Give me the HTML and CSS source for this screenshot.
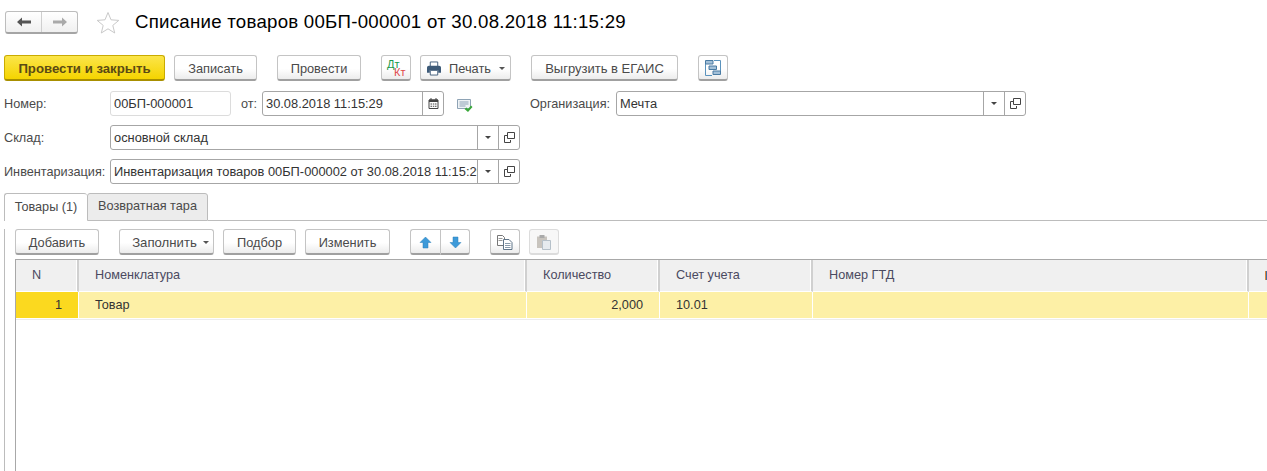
FILE: index.html
```html
<!DOCTYPE html>
<html lang="ru">
<head>
<meta charset="utf-8">
<title>Списание товаров</title>
<link rel="stylesheet" href="styles.css">
</head>
<body>
<div class="page">
  <header class="titlebar">
    <div class="nav">
      <span class="nav-btn"><svg width="16" height="12" viewBox="0 0 16 12"><path d="M1 6l5-4.500v3h9v3H6v3z" fill="#555"/></svg></span>
      <span class="nav-btn"><svg width="16" height="12" viewBox="0 0 16 12"><path d="M15 6l-5-4.500v3H1v3h9v3z" fill="#aaa"/></svg></span>
    </div>
    <svg class="star" width="24" height="23" viewBox="0 0 24 23"><path d="M12 1.500l3 7.300 7.800.6-6 5 1.900 7.600L12 17.800 5.300 22l1.900-7.600-6-5 7.800-.6z" fill="#fff" stroke="#c9c9c9"/></svg>
    <h1 class="title">Списание товаров 00БП-000001 от 30.08.2018 11:15:29</h1>
  </header>

  <div class="toolbar main-tools">
    <button class="btn primary w161">Провести и закрыть</button>
    <button class="btn w83 ml9">Записать</button>
    <button class="btn w84 ml20">Провести</button>
    <button class="btn w30 ml20 dtkt"><span class="dt">Дт</span><span class="kt">Кт</span></button>
    <button class="btn w91 ml9 print">
      <svg width="14" height="15" viewBox="0 0 15 15"><path d="M3.500.500h8v5h-8z" fill="#fff" stroke="#3d5a78"/><path d="M0 6.500q0-2 2-2h11q2 0 2 2V12h-3V9.500H3V12H0z" fill="#3d5a78"/><path d="M3.500 9.500h8v5h-8z" fill="#fff" stroke="#3d5a78"/></svg>
      <span>Печать</span><i class="caret"></i>
    </button>
    <button class="btn w147 ml20 big">Выгрузить в ЕГАИС</button>
    <button class="btn w30 ml20">
      <svg width="16" height="16" viewBox="0 0 16 16"><path d="M.5 4v11.500H7M9 .5h6.500V11" fill="none" stroke="#5b93bd"/><path d="M.5.500h7.500v3.500H.5zM4 6h7.500v3.500H4zM8 11h7.500v3.500H8z" fill="#a3c0d8" stroke="#4a7ba3"/></svg>
    </button>
  </div>

  <div class="form-row first">
    <label class="lbl w106">Номер:</label>
    <div class="field readonly w121"><span class="val">00БП-000001</span></div>
    <label class="lbl from">от:</label>
    <div class="field w182"><span class="val">30.08.2018 11:15:29</span>
      <span class="fbtn"><svg width="11" height="11" viewBox="0 0 11 11"><path d="M1 2h9v8.500H1z" fill="#fff" stroke="#444"/><path d="M1 1.500h9V4H1zM2.500 0h1v2h-1zM7.500 0h1v2h-1z" fill="#444"/><path d="M2.500 5.500h1.500v1H2.500zM4.800 5.500h1.500v1H4.800zM7 5.500h1.500v1H7zM2.500 7.800h1.500v1H2.500zM4.800 7.800h1.500v1H4.800zM7 7.800h1.500v1H7z" fill="#444"/></svg></span>
    </div>
    <svg class="note" width="16" height="14" viewBox="0 0 16 14"><path d="M.5.500h13v9h-13z" fill="#eef2f5" stroke="#8ea3b5"/><path d="M2.500 3h9M2.500 5h9M2.500 7h6" stroke="#8ea3b5"/><path d="M7.500 10l2-1.500 1.500 1.500L14 6.500l1.500 1.500L11 13z" fill="#3aa83a"/></svg>
    <label class="lbl org">Организация:</label>
    <div class="field w410"><span class="val">Мечта</span>
      <span class="fbtn"><i class="caret dark"></i></span>
      <span class="fbtn"><svg class="open" width="11" height="11" viewBox="0 0 11 11"><path d="M3.500.500h7v6h-7z" fill="none" stroke="#444"/><path d="M3 3.500H.5v7h6V8" fill="none" stroke="#444"/></svg></span>
    </div>
  </div>

  <div class="form-row">
    <label class="lbl w106">Склад:</label>
    <div class="field w410"><span class="val">основной склад</span>
      <span class="fbtn"><i class="caret dark"></i></span>
      <span class="fbtn"><svg class="open" width="11" height="11" viewBox="0 0 11 11"><path d="M3.500.500h7v6h-7z" fill="none" stroke="#444"/><path d="M3 3.500H.5v7h6V8" fill="none" stroke="#444"/></svg></span>
    </div>
  </div>

  <div class="form-row">
    <label class="lbl w106">Инвентаризация:</label>
    <div class="field w410"><span class="val">Инвентаризация товаров 00БП-000002 от 30.08.2018 11:15:29</span>
      <span class="fbtn"><i class="caret dark"></i></span>
      <span class="fbtn"><svg class="open" width="11" height="11" viewBox="0 0 11 11"><path d="M3.500.500h7v6h-7z" fill="none" stroke="#444"/><path d="M3 3.500H.5v7h6V8" fill="none" stroke="#444"/></svg></span>
    </div>
  </div>

  <div class="tabs">
    <div class="tab active">Товары (1)</div>
    <div class="tab">Возвратная тара</div>
    <div class="tab-rest"></div>
  </div>

  <section class="panel">
    <div class="toolbar sub-tools">
      <button class="btn w84">Добавить</button>
      <button class="btn w95 ml20 fill"><span>Заполнить</span><i class="caret"></i></button>
      <button class="btn w73 ml9">Подбор</button>
      <button class="btn w85 ml9">Изменить</button>
      <div class="btn-group ml20">
        <button class="btn w30 seg-l"><svg width="13" height="13" viewBox="0 0 13 13"><path d="M6.500 1L12 6.500H9V12H4V6.500H1z" fill="#3d9ad9" stroke="#2b7fb8" stroke-width=".5"/></svg></button>
        <button class="btn w30 seg-r"><svg width="13" height="13" viewBox="0 0 13 13"><path d="M6.500 12L12 6.500H9V1H4v5.500H1z" fill="#3d9ad9" stroke="#2b7fb8" stroke-width=".5"/></svg></button>
      </div>
      <button class="btn w30 ml20"><svg width="16" height="15" viewBox="0 0 16 15"><path d="M.5.500h5l2 2v8h-7z" fill="#fff" stroke="#777"/><path d="M1.500 3.500h4M1.500 5.500h4" stroke="#999"/><path d="M6.500 4.500h5.500l3 3v7h-8.500z" fill="#fff" stroke="#5f7488"/><path d="M8 8.500h5.500M8 10.500h5.500M8 12.500h5.500" stroke="#8a9bab"/></svg></button>
      <button class="btn w30 ml9 disabled"><svg width="16" height="16" viewBox="0 0 16 16"><path d="M1 2.500h10V14H1z" fill="#c8c4be"/><path d="M3.500 1h5v3h-5z" fill="#aaa"/><path d="M6.500 6.500h8v9h-8z" fill="#e6ebef" stroke="#b5c0c9"/></svg></button>
    </div>

    <div class="grid">
      <div class="cell head center">N</div>
      <div class="cell head">Номенклатура</div>
      <div class="cell head">Количество</div>
      <div class="cell head">Счет учета</div>
      <div class="cell head">Номер ГТД</div>
      <div class="cell head last-head"><i class="sliver"></i></div>

      <div class="cell row num current">1</div>
      <div class="cell row">Товар</div>
      <div class="cell row num qty">2,000</div>
      <div class="cell row">10.01</div>
      <div class="cell row"></div>
      <div class="cell row"></div>
    </div>
  </section>
</div>
</body>
</html>
```
FILE: styles.css
```css
* { box-sizing: border-box; }
html, body { margin: 0; height: 100%; overflow: hidden; background: #fff; }
body { font: 12.7px "Liberation Sans", Arial, sans-serif; color: #4a4a4a; }
.page { width: 1267px; height: 471px; padding: 10px 0 0 4px; overflow: hidden; }

.titlebar { display: flex; align-items: center; height: 24px; padding-left: 1px; }
.nav { display: flex; width: 73px; height: 23px; border: 1px solid #bdbdbd; border-bottom: 2px solid #a5a5a5; border-radius: 3px; background: linear-gradient(#fff, #f0f0f0); }
.nav-btn { flex: 1; display: flex; align-items: center; justify-content: center; }
.nav-btn + .nav-btn { border-left: 1px solid #cfcfcf; }
.star { margin-left: 18px; }
.title { margin: 0 0 0 15px; font-size: 18.67px; letter-spacing: .25px; font-weight: 400; color: #000; white-space: nowrap; line-height: 24px; }

.toolbar { display: flex; align-items: stretch; }
.main-tools { margin-top: 21px; height: 26px; }
.sub-tools { height: 26px; margin-left: 10px; margin-top: 8px; }

.btn { display: flex; align-items: center; justify-content: center; gap: 6px; height: 26px; padding: 1px 0 0; border: 1px solid #c4c4c4; border-bottom: 2px solid #a0a0a0; border-radius: 3px; background: linear-gradient(#fff 55%, #ececec); font: 12.8px/23px "Liberation Sans", Arial, sans-serif; color: #4a4a4a; }
.big { font-size: 13px; }
.primary { background: linear-gradient(#fbe54a, #f5d400); border-color: #c9ab00; border-bottom-color: #a88f00; font-weight: 700; font-size: 13.2px; color: #5a4a14; }
.disabled { border-color: #dcdcdc; background: #f7f7f7; }
.w161 { width: 161px; } .w147 { width: 147px; } .w95 { width: 95px; } .w91 { width: 91px; }
.w85 { width: 85px; } .w84 { width: 84px; } .w83 { width: 83px; } .w73 { width: 73px; } .w30 { width: 30px; }
.ml9 { margin-left: 9px; } .ml20 { margin-left: 20px; }

.dtkt { position: relative; display: block; padding: 0; font-size: 11px; line-height: 8px; }
.dt { position: absolute; left: 5px; top: 4px; color: #1a9a4a; }
.kt { position: absolute; left: 12px; top: 12px; color: #e0484a; }
.caret { display: inline-block; width: 0; height: 0; border: 3px solid transparent; border-top: 3px solid #555; border-bottom: 0; }
.caret.dark { border-top-color: #444; }
.print { gap: 8px; padding-left: 1px; }
.fill { gap: 6px; padding-left: 8px; font-size: 13.2px; }

.btn-group { display: flex; }
.seg-l { border-radius: 3px 0 0 3px; border-right: 0; }
.seg-r { border-radius: 0 3px 3px 0; }

.form-row { display: flex; align-items: center; height: 25px; margin-top: 9px; }
.form-row.first { margin-top: 10px; }
.lbl { color: #4a4a4a; white-space: nowrap; }
.w106 { width: 106px; }
.from { margin-left: 10px; width: 21px; }
.org { margin-left: 57px; width: 86px; }
.note { margin: 5px 0 0 13px; }

.field { display: flex; align-items: stretch; height: 25px; border: 1px solid #a6a6a6; border-radius: 3px; background: #fff; overflow: hidden; }
.readonly { border-color: #dcdcdc; }
.w121 { width: 121px; } .w182 { width: 182px; } .w410 { width: 410px; }
.val { flex: 1; min-width: 0; padding-left: 3px; font-size: 12.85px; line-height: 23px; white-space: nowrap; overflow: hidden; color: #333; }
.fbtn { display: flex; align-items: center; justify-content: center; width: 21px; border-left: 1px solid #a6a6a6; flex: none; }
.fbtn .open { display: block; }

.tabs { display: flex; height: 28px; margin-top: 9px; }
.tab { display: flex; align-items: center; justify-content: center; border: 1px solid #bcbcbc; border-radius: 3px 3px 0 0; background: #ececec; white-space: nowrap; width: 121px; }
.tab.active { width: 83px; background: #fff; border-bottom: 0; border-right: 0; padding-bottom: 2px; }
.tab:not(.active) { padding-bottom: 2px; }
.tab-rest { flex: 1; border-bottom: 1px solid #bcbcbc; }

.panel { height: 300px; border-left: 1px solid #bcbcbc; }
.grid { display: grid; grid-template-columns: 63px 448px 133px 153px 436px 60px; grid-template-rows: 32px 27px; min-height: 300px; align-content: start; margin: 4px 0 0 10px; width: 1253px; border-top: 1px solid #a8a8a8; border-left: 1px solid #a8a8a8; }
.cell { display: flex; align-items: center; padding-left: 16px; white-space: nowrap; color: #4a4a4a; border-right: 1px solid #fff; }
.head { padding-bottom: 2px; background: #f0f0f0; border-bottom: 1px solid #fff; border-right: 2px solid #d0d0d0; box-shadow: inset -1px 0 #fff; color: #4a4a60; }
.center { justify-content: center; padding-left: 0; padding-right: 20px; }
.last-head { border-right: 0; box-shadow: none; position: relative; }
.row { background: #fdf0a6; border-bottom: 1px solid #fff; box-shadow: 0 1px #ececec; color: #333; }
.num { justify-content: flex-end; padding-left: 0; }
.current { background: #fbd91f; padding-right: 16px; color: #333; }
.qty { padding-right: 16px; }
.sliver { position: absolute; left: 16px; top: 11px; width: 3px; height: 9px; background: #3d6fa5; border-left: 1px solid #e0863a; }
```
